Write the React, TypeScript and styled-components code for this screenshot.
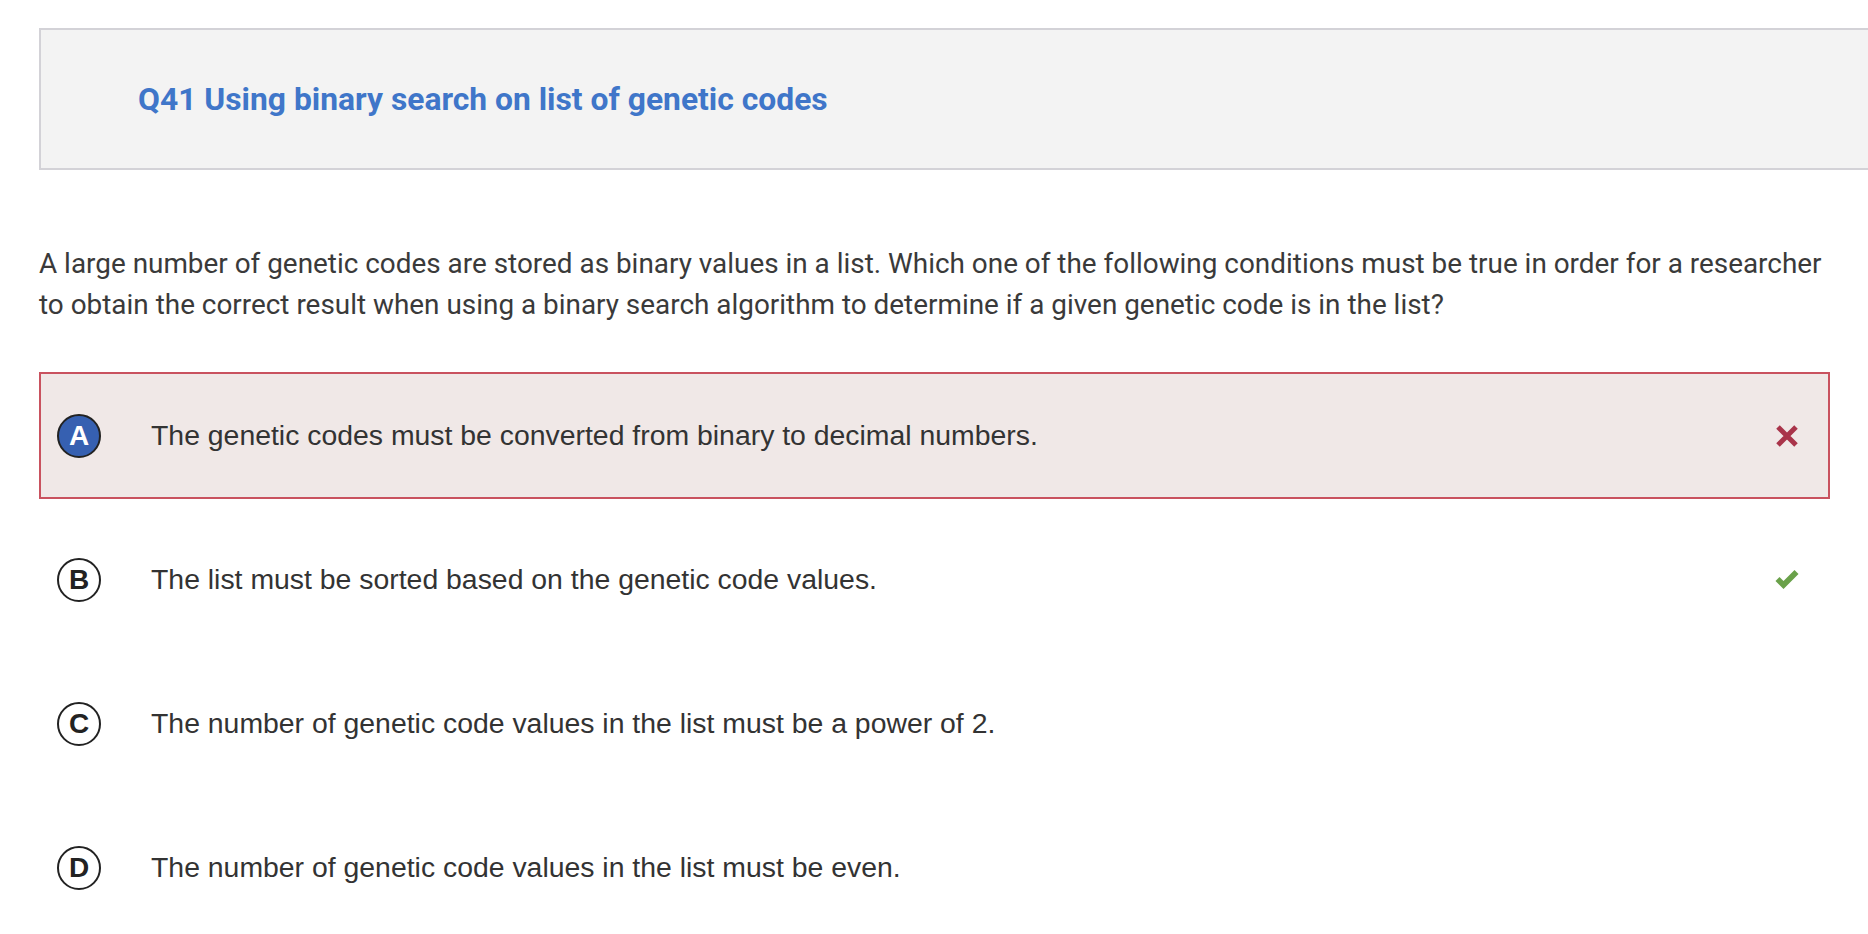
import React from "react";
import styled, { createGlobalStyle } from "styled-components";

const GlobalStyle = createGlobalStyle`
  html, body {
    margin: 0;
    padding: 0;
    background: #ffffff;
    overflow: hidden;
  }
  body {
    font-family: Roboto, "Liberation Sans", Arial, sans-serif;
  }
`;

const Page = styled.div`
  padding: 28px 0 0 39px;
  box-sizing: border-box;
  width: 1868px;
`;

const Header = styled.header`
  height: 142px;
  box-sizing: border-box;
  background: #f3f3f3;
  border: 2px solid #d3d2d7;
  border-right: none;
  display: flex;
  align-items: center;
  padding-left: 97px;
`;

const Title = styled.h1`
  margin: 0;
  font-family: Roboto, "Liberation Sans", sans-serif;
  font-weight: 700;
  font-size: 31.8px;
  color: #3f76c9;
  letter-spacing: 0;
`;

const Body = styled.main`
  padding-right: 38px;
`;

const Prompt = styled.p`
  margin: 73px 0 47px 0;
  font-family: Roboto, "Liberation Sans", sans-serif;
  font-size: 27.9px;
  line-height: 41px;
  color: #3a3a3a;
`;

const Options = styled.ol`
  list-style: none;
  margin: 0;
  padding: 0;
  display: flex;
  flex-direction: column;
  gap: 17px;
`;

const Option = styled.li<{ $wrong?: boolean }>`
  height: 127px;
  box-sizing: border-box;
  display: flex;
  align-items: center;
  padding: 0 28px 0 16px;
  border: 2px solid ${(p) => (p.$wrong ? "#c9525f" : "transparent")};
  background: ${(p) => (p.$wrong ? "#f0e8e7" : "transparent")};
`;

const Letter = styled.span<{ $selected?: boolean }>`
  flex: none;
  width: 44px;
  height: 44px;
  box-sizing: border-box;
  border-radius: 50%;
  border: 2px solid #222222;
  background: ${(p) => (p.$selected ? "#3660b1" : "#ffffff")};
  color: ${(p) => (p.$selected ? "#ffffff" : "#222222")};
  display: flex;
  align-items: center;
  justify-content: center;
  font-family: "Liberation Sans", Arial, sans-serif;
  font-weight: 700;
  font-size: 28px;
  line-height: 1;
`;

const OptionText = styled.span`
  flex: 1;
  margin-left: 50px;
  font-family: "Liberation Sans", Arial, Helvetica, sans-serif;
  font-size: 28.4px;
  color: #333333;
`;

const Mark = styled.span`
  flex: none;
  width: 26px;
  height: 26px;
  display: flex;
  align-items: center;
  justify-content: center;
`;

const Cross = () => (
  <svg width="24" height="24" viewBox="0 0 24 24">
    <path d="M3 3 L21 21 M21 3 L3 21" stroke="#a9344a" strokeWidth="5" fill="none" />
  </svg>
);

const Tick = () => (
  <svg width="27" height="23" viewBox="0 0 26 22">
    <path
      d="M1.5 12.5 L5.5 8.5 L9.5 12.5 L20.5 1.5 L24.5 5.5 L9.5 20.5 Z"
      fill="#6aa14a"
    />
  </svg>
);

type Choice = {
  letter: string;
  text: string;
  selected?: boolean;
  wrong?: boolean;
  correct?: boolean;
};

const choices: Choice[] = [
  {
    letter: "A",
    text: "The genetic codes must be converted from binary to decimal numbers.",
    selected: true,
    wrong: true,
  },
  {
    letter: "B",
    text: "The list must be sorted based on the genetic code values.",
    correct: true,
  },
  {
    letter: "C",
    text: "The number of genetic code values in the list must be a power of 2.",
  },
  {
    letter: "D",
    text: "The number of genetic code values in the list must be even.",
  },
];

export default function App() {
  return (
    <>
      <GlobalStyle />
      <Page>
        <Header>
          <Title>Q41 Using binary search on list of genetic codes</Title>
        </Header>
        <Body>
          <Prompt>
            A large number of genetic codes are stored as binary values in a list. Which one of
            the following conditions must be true in order for a researcher to obtain the correct
            result when using a binary search algorithm to determine if a given genetic code is in
            the list?
          </Prompt>
          <Options>
            {choices.map((c) => (
              <Option key={c.letter} $wrong={c.wrong}>
                <Letter $selected={c.selected}>{c.letter}</Letter>
                <OptionText>{c.text}</OptionText>
                {c.wrong && (
                  <Mark>
                    <Cross />
                  </Mark>
                )}
                {c.correct && (
                  <Mark>
                    <Tick />
                  </Mark>
                )}
              </Option>
            ))}
          </Options>
        </Body>
      </Page>
    </>
  );
}
